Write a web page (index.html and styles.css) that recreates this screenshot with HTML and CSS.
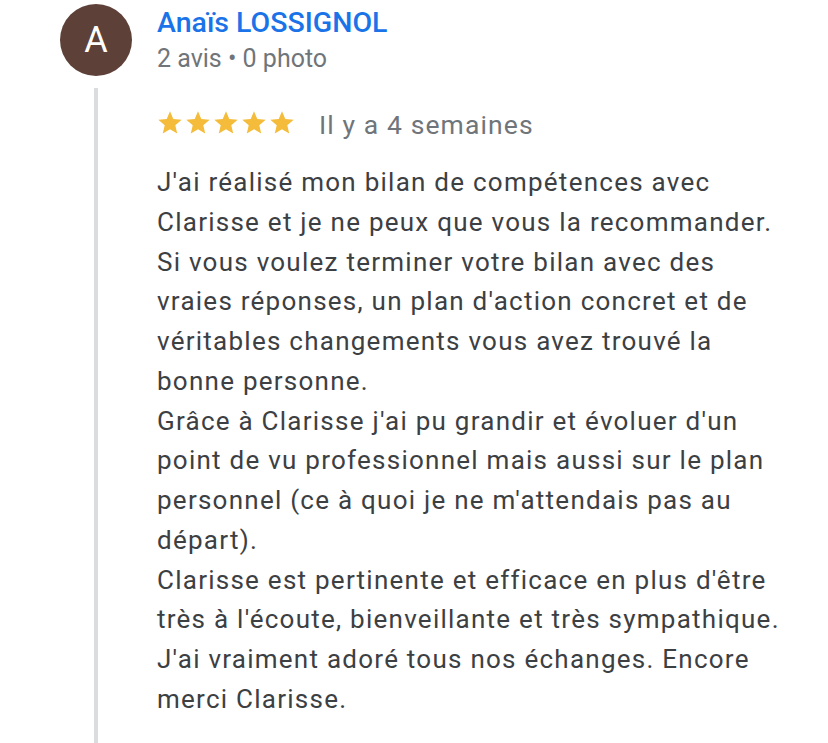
FILE: index.html
```html
<!DOCTYPE html>
<html lang="fr">
<head>
    <meta charset="UTF-8">
    <meta name="viewport" content="width=device-width, initial-scale=1.0">
    <title>Avis</title>
    <link rel="stylesheet" href="styles.css">
</head>
<body>
    <div class="review">
        <div class="author">
            <div class="avatar">A</div>
            <div class="author-info">
                <div class="author-name">Anaïs LOSSIGNOL</div>
                <div class="author-meta">2 avis • 0 photo</div>
            </div>
        </div>

        <div class="review-body">
            <div class="rating">
                <div class="stars">
                    <svg viewBox="0 0 24 24"><path d="M12 17.27L18.18 21l-1.64-7.03L22 9.24l-7.19-.61L12 2 9.19 8.63 2 9.24l5.46 4.73L5.82 21z"/></svg>
                    <svg viewBox="0 0 24 24"><path d="M12 17.27L18.18 21l-1.64-7.03L22 9.24l-7.19-.61L12 2 9.19 8.63 2 9.24l5.46 4.73L5.82 21z"/></svg>
                    <svg viewBox="0 0 24 24"><path d="M12 17.27L18.18 21l-1.64-7.03L22 9.24l-7.19-.61L12 2 9.19 8.63 2 9.24l5.46 4.73L5.82 21z"/></svg>
                    <svg viewBox="0 0 24 24"><path d="M12 17.27L18.18 21l-1.64-7.03L22 9.24l-7.19-.61L12 2 9.19 8.63 2 9.24l5.46 4.73L5.82 21z"/></svg>
                    <svg viewBox="0 0 24 24"><path d="M12 17.27L18.18 21l-1.64-7.03L22 9.24l-7.19-.61L12 2 9.19 8.63 2 9.24l5.46 4.73L5.82 21z"/></svg>
                </div>
                <span class="review-date">Il y a 4 semaines</span>
            </div>
            <p class="review-text">J'ai réalisé mon bilan de compétences avec Clarisse et je ne peux que vous la recommander. Si vous voulez terminer votre bilan avec des vraies réponses, un plan d'action concret et de véritables changements vous avez trouvé la bonne personne.
Grâce à Clarisse j'ai pu grandir et évoluer d'un point de vu professionnel mais aussi sur le plan personnel (ce à quoi je ne m'attendais pas au départ).
Clarisse est pertinente et efficace en plus d'être très à l'écoute, bienveillante et très sympathique. J'ai vraiment adoré tous nos échanges. Encore merci Clarisse.</p>
        </div>
    </div>
</body>
</html>
```

FILE: styles.css
```css
body {
    margin: 0;
    background-color: #fff;
    font-family: Roboto, "Liberation Sans", Arial, sans-serif;
    overflow: hidden;
}
.review {
    padding: 4px 0 0 60px;
}
.author {
    display: flex;
    gap: 25px;
}
.avatar {
    width: 72px;
    height: 72px;
    border-radius: 50%;
    background-color: #5d4037;
    color: #fff;
    font-size: 36px;
    display: flex;
    justify-content: center;
    align-items: center;
}
.author-info {
    padding-top: 2px;
}
.author-name {
    font-size: 28.5px;
    line-height: 34px;
    font-weight: 500;
    color: #1a73e8;
}
.author-meta {
    font-size: 25px;
    line-height: 38px;
    color: #70757a;
}
.review-body {
    margin: 10px 0 0 34px;
    border-left: 4px solid #dadce0;
    padding: 21px 0 60px 59px;
}
.rating {
    display: flex;
    align-items: center;
    height: 28px;
}
.stars {
    display: flex;
    margin-left: -1px;
}
.stars svg {
    width: 28px;
    height: 28px;
    fill: #f4bc3a;
}
.review-date {
    margin: 2px 0 0 23px;
    font-size: 26.5px;
    letter-spacing: 1.1px;
    color: #70757a;
}
.review-text {
    margin: 26px 0 0;
    width: 632px;
    font-size: 26px;
    line-height: 39.75px;
    letter-spacing: 1.25px;
    color: #3c4043;
    white-space: pre-line;
}
```
